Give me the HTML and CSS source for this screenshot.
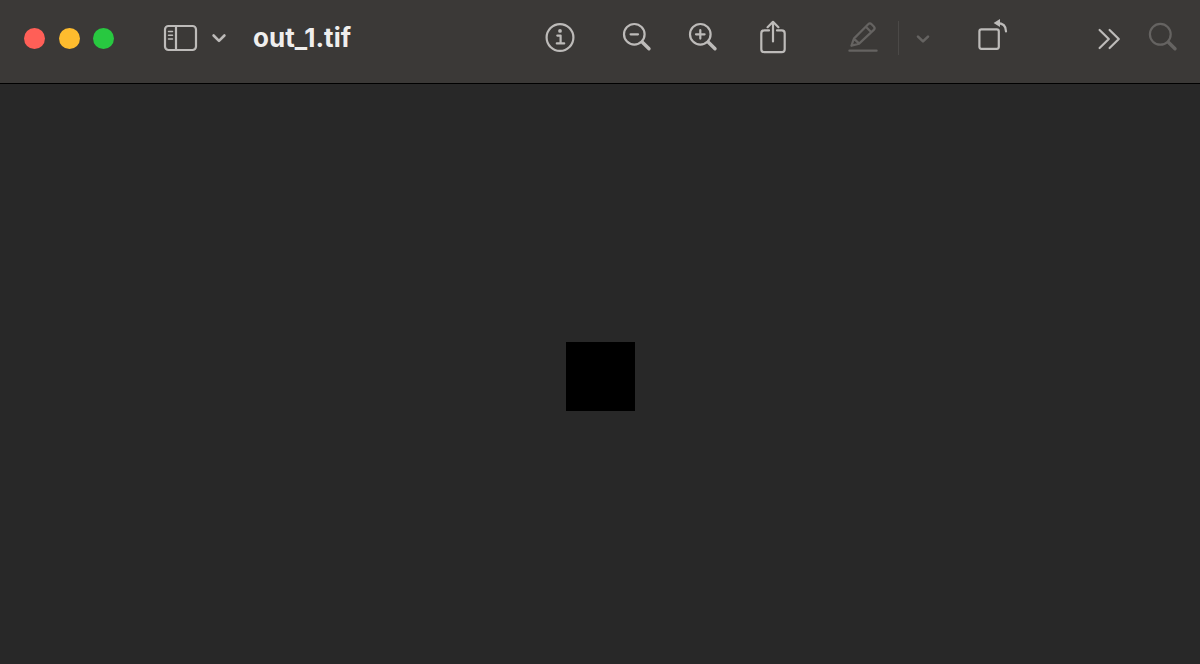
FILE: index.html
```html
<!DOCTYPE html>
<html lang="en">
<head>
<meta charset="utf-8">
<meta name="viewport" content="width=device-width, initial-scale=1">
<title>out_1.tif</title>
<link rel="stylesheet" href="styles.css">
</head>
<body>
<header class="toolbar">
  <div class="lights">
    <button class="light light-close" aria-label="Close"></button>
    <button class="light light-minimize" aria-label="Minimize"></button>
    <button class="light light-zoom" aria-label="Full screen"></button>
  </div>
  <div class="sidebar-group">
    <button class="tool" aria-label="Sidebar">
      <svg viewBox="0 0 40 40"><rect x="5" y="8" width="31" height="24" rx="3.5"/><path d="M16 8V32"/><path class="fine" d="M8.5 13.5H12.5M8.5 17.3H12.5M8.5 21.1H12.5"/></svg>
    </button>
    <button class="tool narrow" aria-label="Sidebar options">
      <svg viewBox="0 0 24 40"><path class="bold" d="M6.6 17.5L12 22.9L17.4 17.5"/></svg>
    </button>
  </div>
  <h1 class="title">out_1.tif</h1>
  <div class="tools">
    <div class="set view-set">
      <button class="tool" aria-label="Info">
        <svg viewBox="0 0 40 40"><circle cx="20" cy="19.5" r="13.4"/><circle class="dot" cx="20" cy="12.9" r="1.9"/><path d="M17.3 17.6H20.6V25.4M16.8 25.4H24.2"/></svg>
      </button>
    </div>
    <div class="set zoom-set">
      <button class="tool" aria-label="Zoom out">
        <svg viewBox="0 0 40 40"><circle cx="17.3" cy="16.3" r="10.3"/><path d="M13.6 16.3H21"/><path class="handle" d="M25.4 24.2L32 30.8"/></svg>
      </button>
      <button class="tool" aria-label="Zoom in">
        <svg viewBox="0 0 40 40"><circle cx="17.3" cy="16.3" r="10.3"/><path d="M13 16.3H21.6M17.3 12V20.6"/><path class="handle" d="M25.4 24.2L32 30.8"/></svg>
      </button>
    </div>
    <button class="tool share" aria-label="Share">
      <svg viewBox="0 0 40 40"><path d="M16 12.4H11.3Q8.3 12.4 8.3 15.4V31.2Q8.3 34.2 11.3 34.2H28.7Q31.7 34.2 31.7 31.2V15.4Q31.7 12.4 28.7 12.4H24M20 23.5V4M14.6 9.2L20 3.8L25.4 9.2"/></svg>
    </button>
    <div class="set markup-set">
      <button class="tool" disabled aria-label="Markup">
        <svg viewBox="0 0 40 40"><path d="M6.4 32.7H33.6"/><path d="M8.4 27.8L10.9 20.6L25.2 6.3Q26.9 4.6 28.6 6.3L30.8 8.5Q32.5 10.2 30.8 11.9L16.1 25.6ZM10.9 20.6L16.1 25.6M22.8 8.7L28.4 14.3"/></svg>
      </button>
      <span class="divider"></span>
      <button class="tool narrow" disabled aria-label="Markup options">
        <svg viewBox="0 0 24 40"><path class="bold" d="M7 18.6L12 23.4L17 18.6"/></svg>
      </button>
    </div>
    <button class="tool rotate" aria-label="Rotate">
      <svg viewBox="0 0 40 40"><rect x="6.4" y="11.4" width="19.4" height="19.4" rx="2"/><path d="M24 5.2C30 5.2 33 8 33 13.4"/><path class="dot" d="M20.6 5L27 1V9Z"/></svg>
    </button>
    <div class="set end-set">
      <button class="tool" aria-label="More">
        <svg viewBox="0 0 40 40"><path d="M10.6 12L19.8 21L10.6 30M20.6 12L29.8 21L20.6 30"/></svg>
      </button>
      <button class="tool" disabled aria-label="Search">
        <svg viewBox="0 0 40 40"><circle cx="17.3" cy="16.3" r="10.4"/><path class="handle" d="M25.4 24.2L32 30.8"/></svg>
      </button>
    </div>
  </div>
</header>
<main class="viewer">
  <div class="picture" role="img" aria-label="out_1.tif"></div>
</main>
</body>
</html>
```
FILE: styles.css
```css
* {
  box-sizing: border-box;
}

body {
  display: flex;
  flex-direction: column;
  min-height: 100vh;
  margin: 0;
  background: #282828;
  font-family: Inter, "Liberation Sans", sans-serif;
}

.toolbar {
  display: flex;
  align-items: center;
  padding: 18px 17px 25px 24px;
  background: #3b3937;
  border-bottom: 1px solid #000;
}

.lights {
  display: flex;
  justify-content: space-between;
  width: 90px;
}

.light {
  width: 21px;
  height: 21px;
  padding: 0;
  border: 0;
  border-radius: 50%;
}

.light-close {
  background: #ff5f57;
}

.light-minimize {
  background: #febc2e;
}

.light-zoom {
  background: #28c840;
}

.sidebar-group {
  display: flex;
  gap: 7px;
  margin-left: 46px;
}

.tool {
  width: 40px;
  height: 40px;
  padding: 0;
  border: 0;
  background: none;
  color: #bdbbb9;
}

.tool:disabled {
  color: #656361;
}

.narrow {
  width: 24px;
}

.tool svg {
  display: block;
  width: 100%;
  height: 100%;
  fill: none;
  stroke: currentColor;
  stroke-width: 2.2;
  stroke-linecap: round;
  stroke-linejoin: round;
}

.tool .fine {
  stroke-width: 1.5;
}

.tool .bold {
  stroke-width: 2.6;
}

.tool .handle {
  stroke-width: 3.4;
}

.tool .dot {
  fill: currentColor;
  stroke: none;
}

.title {
  margin: 0 0 0 22px;
  color: #efeeed;
  font-size: 26px;
  font-weight: 700;
  line-height: 40px;
}

.tools,
.set {
  display: flex;
  align-items: center;
}

.tools {
  margin-left: auto;
}

.zoom-set {
  gap: 26px;
  margin-left: 37px;
}

.share {
  margin-left: 30px;
}

.markup-set {
  margin-left: 50px;
}

.divider {
  width: 1px;
  height: 34px;
  margin: 0 12px 0 15px;
  background: #4b4947;
}

.rotate {
  margin-left: 38px;
}

.end-set {
  gap: 14px;
  margin-left: 76px;
}

.viewer {
  display: flex;
  flex: 1;
  align-items: center;
  justify-content: center;
  padding-top: 5px;
}

.picture {
  width: 69px;
  height: 69px;
  background: #000;
}
```
